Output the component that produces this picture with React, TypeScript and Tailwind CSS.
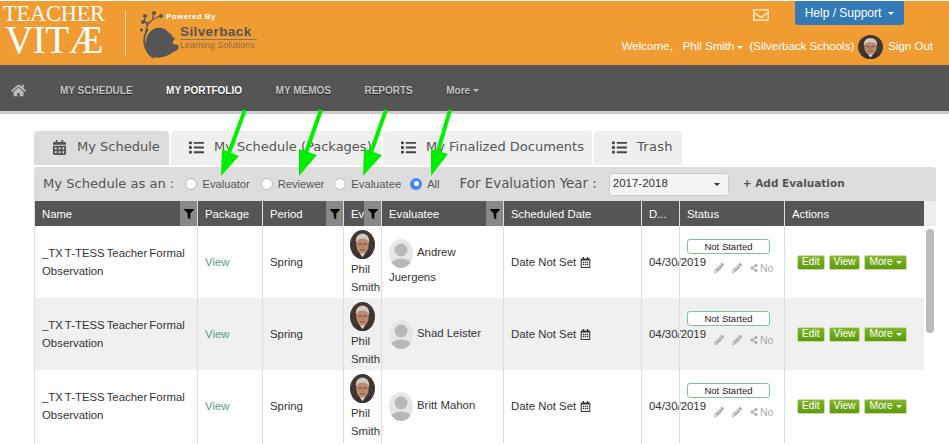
import { FaCalendarAlt, FaFilter, FaHome, FaList, FaPencilAlt, FaRegCalendarAlt, FaRegEnvelope, FaShareAlt } from 'react-icons/fa'

const sans = "font-['Liberation_Sans',Arial,sans-serif]"
const verdana = "font-['DejaVu_Sans',Verdana,sans-serif]"
const cols = 'grid-cols-[162px_65px_81px_38px_122px_138px_38px_105px_140px]'

const rows = [
   { first: 'Andrew', rest: 'Juergens' },
   { first: 'Shad Leister', rest: '' },
   { first: 'Britt Mahon', rest: '' },
]

function Caret() {
   return <span className="inline-block align-middle border-x-[3px] border-t-[3px] border-x-transparent border-t-current" />
}

function Face({ className }: { className: string }) {
   return (
      <svg viewBox="0 0 50 50" preserveAspectRatio="none" className={className}>
         <defs>
            <clipPath id="face-clip">
               <ellipse cx="25" cy="25" rx="25" ry="25" />
            </clipPath>
         </defs>
         <g clipPath="url(#face-clip)">
            <rect width="50" height="50" fill="#43362d" />
            <path d="M0 50c1-9 11-12 25-12s24 3 25 12z" fill="#35312e" />
            <path d="M18 38l7 9 7-9-7-2z" fill="#d9d4cc" />
            <ellipse cx="25" cy="25" rx="12.5" ry="16" fill="#b98a6e" />
            <path d="M12 23c-2-11 5-17 13-17s15 6 13 17c-2-5-4-8-13-8s-11 3-13 8z" fill="#cfcac1" />
            <path d="M17 24h6M27 24h6" stroke="#553a2a" strokeWidth="1.8" />
            <path d="M25 25v5" stroke="#96684f" strokeWidth="1.4" />
            <path d="M20 34h10" stroke="#84483a" strokeWidth="1.6" />
         </g>
      </svg>
   )
}

function Placeholder() {
   return (
      <svg viewBox="0 0 24 29" className="inline-block align-middle w-[24px] h-[29px] mr-[4px]">
         <defs>
            <clipPath id="ph-clip">
               <ellipse cx="12" cy="14.5" rx="12" ry="14.5" />
            </clipPath>
         </defs>
         <g clipPath="url(#ph-clip)">
            <rect width="24" height="29" fill="#e6e6e6" />
            <circle cx="12" cy="11" r="6.5" fill="#b8b8b8" />
            <ellipse cx="12" cy="27" rx="11" ry="7.5" fill="#b8b8b8" />
         </g>
      </svg>
   )
}

function Logo() {
   return (
      <div className="flex items-start">
         <div className="w-[125px] pl-[3px] pt-[1px] font-['Liberation_Serif',serif] text-white">
            <div className="text-[22.4px] leading-[24px] tracking-[-0.2px] whitespace-nowrap">TEACHER</div>
            <div className="mt-[-1px] text-[39px] leading-[30px] tracking-[-0.4px] pl-[2px]">VITÆ</div>
         </div>
         <div className="mt-[9px] h-[46px] w-px bg-[#f7d9aa]" />
         <svg viewBox="0 0 50 50" className="ml-[14px] mt-[9px] w-[50px] h-[50px]">
            <path d="M10 22C14 17 24 16 28 22C31 24 34 26 35 29C33 31 32 32 33 34L38 35C40 38 37 41 33 42C28 46 20 49 14 47C7 44 4 36 6 30C7 26 8 24 10 22Z" fill="#555" />
            <path d="M8 19A20 20 0 0 0 14 48" fill="none" stroke="#555" strokeWidth="1.8" />
            <path d="M6 22C6 14 10 10 20 6M8 16C5 12 4 10 5 6M13 10C12 7 13 5 14 3M10 13L3 12" fill="none" stroke="#555" strokeWidth="1.2" />
            <circle cx="3" cy="12" r="2" fill="#555" />
            <circle cx="5" cy="6" r="2" fill="#555" />
            <circle cx="14" cy="3" r="2" fill="#555" />
            <circle cx="21" cy="6" r="2" fill="#555" />
            <circle cx="1.5" cy="20" r="1.6" fill="#555" />
            <circle cx="33" cy="26" r="1.2" fill="#f09c33" />
         </svg>
         <div className="ml-[-10px] mt-[10px] w-[77px] whitespace-nowrap">
            <div className="ml-[-14px] text-[8px] leading-[11px] font-bold text-white tracking-[0.4px]">Powered By</div>
            <div className={`${sans} mt-[2px] text-[13.5px] leading-[15px] font-bold text-[#555] tracking-[0.4px]`}>Silverback</div>
            <div className="h-px bg-[#777]" />
            <div className={`${sans} text-[8.8px] leading-[11px] text-[#8a6a45] tracking-[0.1px]`}>Learning Solutions</div>
         </div>
      </div>
   )
}

function Header() {
   return (
      <div className={`${sans} mt-px h-[64px] bg-[#f09c33] flex justify-between`}>
         <Logo />
         <div className="flex flex-col items-end pr-[16px] text-white text-[11.5px]">
            <div className="flex items-start h-[34px] text-[12px]">
               <FaRegEnvelope className="mt-[6px] mr-[26px] text-[16px] text-[#fbe6c8]" />
               <div className="w-[109px] h-[24px] mr-[29px] rounded-b-[3px] bg-[#337ab7] flex items-center justify-center gap-[7px]">
                  Help / Support <Caret />
               </div>
            </div>
            <div className="flex items-center">
               <span>Welcome,</span>
               <span className="ml-[10px]">Phil Smith</span>
               <span className="ml-[3px]"><Caret /></span>
               <span className="ml-[6px]">(Silverback Schools)</span>
               <Face className="ml-[4px] w-[25px] h-[24px]" />
               <span className="ml-[5px]">Sign Out</span>
            </div>
         </div>
      </div>
   )
}

function Nav() {
   return (
      <div className="h-[49px] bg-[#555] border-b-[3px] border-[#ccc] flex items-center pl-[11px] pt-[4px]">
         <FaHome className="text-[15px] text-[#bbb]" />
         <div className={`${sans} ml-[34px] flex gap-[33.5px] text-[10px] font-bold text-[#c4c4c4] [text-shadow:0_1px_1px_#222]`}>
            <span>MY SCHEDULE</span>
            <span className="text-white">MY PORTFOLIO</span>
            <span>MY MEMOS</span>
            <span>REPORTS</span>
            <span className="flex items-center gap-[3px]">More <Caret /></span>
         </div>
      </div>
   )
}

function Tabs() {
   const tab = 'h-[34px] pb-[2px] pl-[18px] gap-[10px] flex items-center rounded-t-[4px]'
   return (
      <div className={`${verdana} flex gap-[2px] text-[13px] text-[#555]`}>
         <div className={`${tab} w-[135px] bg-[#ddd]`}>
            <FaCalendarAlt className="text-[15px]" /> My Schedule
         </div>
         <div className={`${tab} w-[210px] bg-[#efefef]`}>
            <FaList className="text-[15px] text-[#444]" /> My Schedule (Packages)
         </div>
         <div className={`${tab} w-[209px] bg-[#efefef]`}>
            <FaList className="text-[15px] text-[#444]" /> My Finalized Documents
         </div>
         <div className={`${tab} w-[88px] bg-[#efefef]`}>
            <FaList className="text-[15px] text-[#444]" /> <span className="tracking-[0.3px]">Trash</span>
         </div>
      </div>
   )
}

function Radio({ label, checked, className }: { label: string; checked?: boolean; className: string }) {
   return (
      <span className={`flex items-center ${className}`}>
         {checked ? (
            <span className="w-[12px] h-[12px] rounded-full bg-[#3f8cf0] flex items-center justify-center">
               <span className="w-[5px] h-[5px] rounded-full bg-white" />
            </span>
         ) : (
            <span className="w-[12px] h-[12px] rounded-full bg-white border border-[#bbb]" />
         )}
         <span className={`${sans} ml-[5px] text-[11.2px] text-[#555]`}>{label}</span>
      </span>
   )
}

function FilterBar() {
   return (
      <div className={`${verdana} mt-[2px] h-[34px] w-[902px] rounded-t-[4px] bg-[#ddd] flex items-center pl-[9px] text-[13.1px] text-[#555]`}>
         <span>My Schedule as an :</span>
         <Radio label="Evaluator" className="ml-[11px]" />
         <Radio label="Reviewer" className="ml-[11px]" />
         <Radio label="Evaluatee" className="ml-[10px]" />
         <Radio label="All" checked className="ml-[9px]" />
         <span className="ml-[20px] text-[13.4px]">For Evaluation Year :</span>
         <div className={`${sans} ml-[12px] w-[120px] h-[23px] rounded-[3px] border border-[#ccc] bg-[#f4f4f4] flex items-center justify-between pl-[3px] pr-[8px] text-[11.5px] text-[#333]`}>
            2017-2018 <Caret />
         </div>
         <span className="ml-[14px] text-[10.5px] font-bold">+ Add Evaluation</span>
      </div>
   )
}

function HeadCell({ label, filter, className = '' }: { label: string; filter?: boolean; className?: string }) {
   return (
      <div className={`flex items-stretch border-l border-[#ddd] first:border-l-0 overflow-hidden ${className}`}>
         <span className="flex-1 pl-[7px] pt-px leading-[25px] overflow-hidden whitespace-nowrap">{label}</span>
         {filter ? (
            <span className="w-[17px] shrink-0 bg-[#888] flex items-center justify-center">
               <FaFilter className="text-[10px] text-black" />
            </span>
         ) : null}
      </div>
   )
}

function TableHead() {
   return (
      <div className="bg-[#eee]">
         <div className={`${sans} grid ${cols} w-[889px] h-[25px] bg-[#555] text-white text-[11.3px]`}>
            <HeadCell label="Name" filter />
            <HeadCell label="Package" />
            <HeadCell label="Period" filter />
            <HeadCell label="Ev" filter />
            <HeadCell label="Evaluatee" filter />
            <HeadCell label="Scheduled Date" />
            <HeadCell label="D..." />
            <HeadCell label="Status" />
            <HeadCell label="Actions" />
         </div>
      </div>
   )
}

function ActionButton({ children }: { children: React.ReactNode }) {
   return (
      <span className="h-[15px] px-[4px] flex items-center gap-[3px] rounded-[2px] bg-gradient-to-b from-[#80b828] to-[#5c9a0c] border border-[#c6dca0] text-white text-[10.2px]">
         {children}
      </span>
   )
}

function Row({ first, rest, striped }: { first: string; rest: string; striped: boolean }) {
   const cell = 'border-l border-[#ddd] flex items-center'
   return (
      <div className={`grid ${cols} w-[889px] h-[72.2px] text-[11.4px] leading-[18px] text-[#333] ${striped ? 'bg-[#f0f0f0]' : 'bg-white'}`}>
         <div className="flex items-center pl-[7px] pr-[4px] [word-spacing:-1px]">_TX T-TESS Teacher Formal Observation</div>
         <div className={`${cell} pl-[7px] text-[#5b9a85]`}>View</div>
         <div className={`${cell} pl-[7px]`}>Spring</div>
         <div className={`${cell} flex-col items-start pl-[6px] pt-[4px] whitespace-nowrap`}>
            <Face className="w-[25px] h-[29px]" />
            <div className="pl-px mt-[1px]">Phil</div>
            <div className="pl-px">Smith</div>
         </div>
         <div className={`${cell} pl-[7px]`}>
            <div>
               <Placeholder />
               <span className="inline-block align-middle pb-[3px]">{first}</span>
               {rest ? <div>{rest}</div> : null}
            </div>
         </div>
         <div className={`${cell} pl-[7px]`}>
            Date Not Set <FaRegCalendarAlt className="ml-[4px] text-[11px]" />
         </div>
         <div className={`${cell} pl-[7px] whitespace-nowrap`}>04/30/2019</div>
         <div className={`${cell} flex-col items-start pt-[13px] pl-[7px]`}>
            <div className="w-[83px] h-[15px] rounded-[3px] border border-[#7cc59a] bg-white text-center text-[9.5px] leading-[13px] text-[#222]">
               Not Started
            </div>
            <div className="mt-[5px] ml-[27px] flex items-center text-[#aaa] text-[10.5px]">
               <FaPencilAlt className="text-[10px]" />
               <FaPencilAlt className="ml-[8px] text-[10px]" />
               <FaShareAlt className="ml-[8px] text-[8px]" />
               <span className="ml-[2px]">No</span>
            </div>
         </div>
         <div className={`${cell} pl-[12px] gap-[4px]`}>
            <ActionButton>Edit</ActionButton>
            <ActionButton>View</ActionButton>
            <ActionButton>
               More <Caret />
            </ActionButton>
         </div>
      </div>
   )
}

function Arrows() {
   const arrows = [
      { tail: '245,110', shaft: '227,158', head: '222,149 239,156 221,176' },
      { tail: '321,110', shaft: '304,158', head: '299,149 317,155 299,176' },
      { tail: '386,110', shaft: '369,158', head: '364,149 382,155 363,176' },
      { tail: '450,110', shaft: '436,158', head: '431,149 448,154 431,176' },
   ]
   return (
      <svg viewBox="0 0 949 444" className="absolute inset-0 w-[949px] h-[444px] pointer-events-none">
         {arrows.map(({ tail, shaft, head }) => (
            <g key={tail}>
               <polyline points={`${tail} ${shaft}`} stroke="#00ee00" strokeWidth="4" fill="none" />
               <polygon points={head} fill="#00ee00" />
            </g>
         ))}
      </svg>
   )
}

export default function App() {
   return (
      <div className={`${sans} relative w-[949px] h-[444px] overflow-hidden bg-white`}>
         <Header />
         <Nav />
         <div className="pl-[34px] pt-[17px]">
            <Tabs />
            <FilterBar />
            <div className="relative border-l border-[#ddd] w-[902px]">
               <TableHead />
               {rows.map((row, index) => (
                  <Row key={row.first} first={row.first} rest={row.rest} striped={index === 1} />
               ))}
               <div className="absolute left-[891px] top-[28px] w-[8px] h-[104px] rounded-full bg-[#bbb]" />
            </div>
         </div>
         <Arrows />
      </div>
   )
}
